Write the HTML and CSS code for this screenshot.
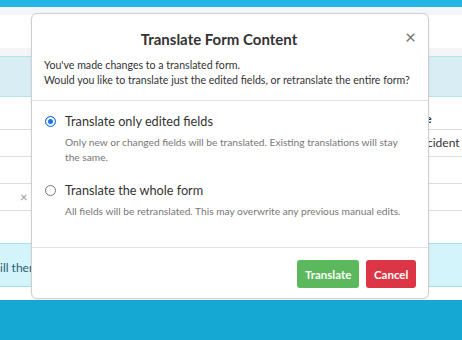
FILE: index.html
```html
<!DOCTYPE html>
<html lang="en">
<head>
	<meta charset="utf-8" />
	<title>Translate Form Content</title>
	<link rel="stylesheet" href="styles.css">
</head>
<body>

	<!-- page behind the dialog -->
	<div class="page">
		<div class="topbar"></div>
		<div class="subbar"></div>
		<div class="toolbar"></div>
		<div class="gap"></div>
		<div class="notice"></div>

		<div class="table">
			<div class="row head"><span class="cell-l"></span><span class="cell-r"><span class="head-text">Type</span></span></div>
			<div class="row"><span class="cell-l"></span><span class="cell-r">Incident</span></div>
			<div class="row"><span class="cell-l"></span><span class="cell-r"></span></div>
			<div class="row"><span class="cell-l"><span class="clear">&times;</span></span><span class="cell-r"></span></div>
		</div>

		<div class="spacer"></div>
		<div class="info"><span class="info-text">ill then</span></div>
		<div class="spacer2"></div>
		<div class="footer"></div>
	</div>

	<!-- dialog -->
	<div class="modal">
		<div class="modal-header">
			<h2>Translate Form Content</h2>
			<span class="close">&times;</span>
			<p>
				You've made changes to a translated form.<br />
				Would you like to translate just the edited fields, or retranslate the entire form?
			</p>
		</div>

		<div class="modal-body">
			<label class="option">
				<span class="radio checked"></span>
				<span class="option-text">
					<span class="option-title">Translate only edited fields</span>
					<span class="option-desc">Only new or changed fields will be translated. Existing translations will stay the same.</span>
				</span>
			</label>
			<label class="option">
				<span class="radio"></span>
				<span class="option-text">
					<span class="option-title">Translate the whole form</span>
					<span class="option-desc">All fields will be retranslated. This may overwrite any previous manual edits.</span>
				</span>
			</label>
		</div>

		<div class="modal-footer">
			<button class="btn btn-translate">Translate</button>
			<button class="btn btn-cancel">Cancel</button>
		</div>
	</div>

</body>
</html>
```

FILE: styles.css
```css
html,body {
	margin:0;
	padding:0;
	}
body {
	width:462px;
	height:340px;
	overflow:hidden;
	position:relative;
	background-color:#fff;
	font-family:"Lato","Liberation Sans",sans-serif;
	color:#333;
	}

/* background page */
.topbar {
	height:7px;
	background-color:#22b6e4;
	}
.subbar {
	height:8px;
	background-color:#f4f5f6;
	}
.toolbar {
	height:33px;
	background-color:#fff;
	}
.gap {
	height:8px;
	background-color:#f4f5f6;
	}
.notice {
	height:39px;
	background-color:#d9edf5;
	border-top:1px solid #b5e2ef;
	border-bottom:1px solid #b5e2ef;
	}

.table {
	padding-top:1px;
	}
.row {
	display:flex;
	justify-content:space-between;
	height:26px;
	border-bottom:1px solid #ddd;
	font-size:12px;
	}
.row.head {
	height:31px;
	font-weight:bold;
	}
.cell-l {
	width:31px;
	position:relative;
	}
.cell-r {
	width:45px;
	padding-top:13px;
	box-sizing:border-box;
	white-space:nowrap;
	}
.head-text {
	margin-left:-11px;
	}
.row + .row .cell-r {
	padding-top:5px;
	}
.clear {
	position:absolute;
	left:20px;
	top:5px;
	color:#999;
	font-size:13px;
	}

.spacer {
	height:32px;
	}
.info {
	height:42px;
	background-color:#d3f4fb;
	border-top:1px solid #9fe2f1;
	border-bottom:1px solid #9fe2f1;
	font-size:12px;
	color:#2c5e75;
	}
.info-text {
	display:block;
	padding-top:16px;
	}
.spacer2 {
	height:13px;
	}
.footer {
	height:40px;
	background-color:#14a8d3;
	}

/* dialog */
.modal {
	position:absolute;
	left:31px;
	top:13px;
	width:396px;
	height:284px;
	background-color:#fff;
	border:1px solid #cfcfcf;
	border-radius:6px;
	box-shadow:0 1px 3px rgba(0,0,0,0.08);
	display:flex;
	flex-direction:column;
	}
.modal-header {
	position:relative;
	padding:16px 14px 13px 12px;
	border-bottom:1px solid #e2e2e2;
	}
.modal-header h2 {
	margin:0 0 10px 0;
	padding-right:20px;
	text-align:center;
	font-size:15px;
	font-weight:bold;
	color:#333;
	}
.close {
	position:absolute;
	right:12px;
	top:11px;
	font-size:19px;
	color:#777;
	}
.modal-header p {
	margin:0;
	font-size:10.6px;
	line-height:14.5px;
	color:#333;
	white-space:nowrap;
	}

.modal-body {
	flex:1;
	padding:12px 14px 0 12px;
	}
.option {
	display:flex;
	gap:9px;
	margin-bottom:17px;
	}
.radio {
	flex:none;
	width:9px;
	height:9px;
	margin:3px 0 0 1px;
	border:1px solid #777;
	border-radius:50%;
	background-color:#fff;
	}
.radio.checked {
	border-color:#1a73e8;
	background-color:#1a73e8;
	box-shadow:inset 0 0 0 2px #fff;
	}
.option-text {
	display:flex;
	flex-direction:column;
	}
.option-title {
	font-size:12.7px;
	color:#333;
	line-height:16px;
	}
.option-desc {
	margin-top:6px;
	font-size:10.2px;
	line-height:15px;
	color:#777;
	}

.modal-footer {
	display:flex;
	justify-content:flex-end;
	gap:7px;
	padding:12px 12px 10px 12px;
	border-top:1px solid #e2e2e2;
	}
.btn {
	height:28px;
	border:0;
	border-radius:3px;
	font-family:inherit;
	font-size:11.5px;
	font-weight:bold;
	color:#fff;
	padding:0 8px;
	}
.btn-translate {
	width:62px;
	background-color:#5cb85c;
	}
.btn-cancel {
	width:50px;
	background-color:#dc3545;
	}
```
